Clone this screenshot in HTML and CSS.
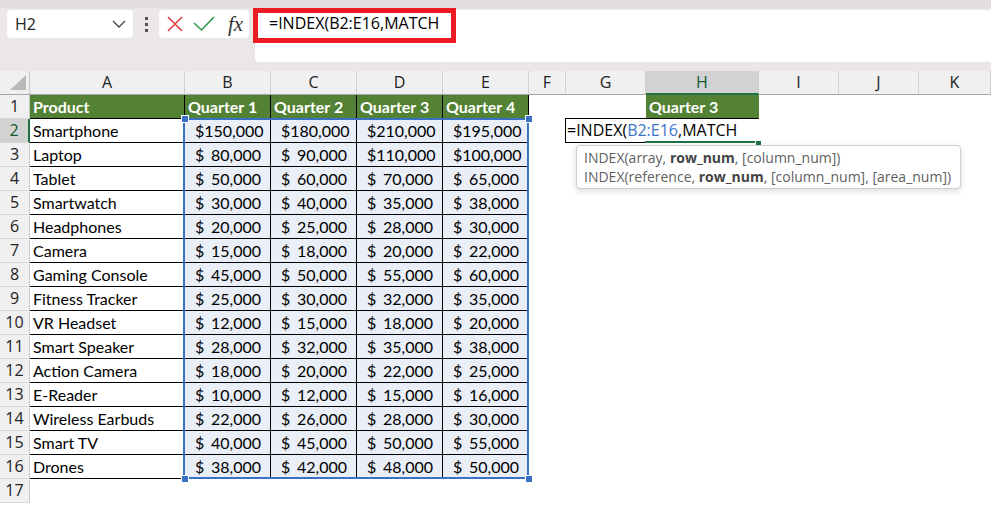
FILE: index.html
```html
<!DOCTYPE html>
<html lang="en">
<head>
    <meta charset="UTF-8">
    <meta name="viewport" content="width=device-width, initial-scale=1.0">
    <title>INDEX MATCH - Quarter 3</title>
    <link rel="stylesheet" href="styles.css">
</head>
<body>
    <div class="toolbar">
        <div class="name-box">
            <span>H2</span>
            <svg class="chevron" width="14" height="8" viewBox="0 0 14 8">
                <polyline points="1,1 7,7 13,1" fill="none" stroke="#444" stroke-width="1.3"/>
            </svg>
        </div>
        <div class="dots"><i></i><i></i><i></i></div>
        <div class="fx-buttons">
            <svg width="16" height="16" viewBox="0 0 16 16">
                <path d="M1 1 L15 15 M15 1 L1 15" stroke="#e0393e" stroke-width="1.5" fill="none"/>
            </svg>
            <svg width="22" height="16" viewBox="0 0 22 16">
                <polyline points="1,7 8.5,14 21,1" fill="none" stroke="#2f9a4c" stroke-width="1.6"/>
            </svg>
            <span class="fx">fx</span>
        </div>
        <div class="formula-bar">=INDEX(B2:E16,MATCH</div>
        <div class="callout"></div>
    </div>

    <div class="sheet">
        <div class="row col-heads">
            <div class="corner"></div>
            <div class="ch">A</div><div class="ch">B</div><div class="ch">C</div><div class="ch">D</div>
            <div class="ch">E</div><div class="ch">F</div><div class="ch">G</div><div class="ch on">H</div>
            <div class="ch">I</div><div class="ch">J</div><div class="ch">K</div>
        </div>

        <div class="row">
            <div class="rh">1</div>
            <div class="c t hd">Product</div>
            <div class="c t hd">Quarter 1</div><div class="c t hd">Quarter 2</div>
            <div class="c t hd">Quarter 3</div><div class="c t hd">Quarter 4</div>
            <div class="c"></div><div class="c"></div>
            <div class="c hd lookup">Quarter 3</div>
        </div>
        <div class="row">
            <div class="rh on">2</div><div class="c t">Smartphone</div>
            <div class="c t n"><span>$</span>150,000</div><div class="c t n"><span>$</span>180,000</div>
            <div class="c t n"><span>$</span>210,000</div><div class="c t n"><span>$</span>195,000</div>
        </div>
        <div class="row">
            <div class="rh">3</div><div class="c t">Laptop</div>
            <div class="c t n"><span>$</span>80,000</div><div class="c t n"><span>$</span>90,000</div>
            <div class="c t n"><span>$</span>110,000</div><div class="c t n"><span>$</span>100,000</div>
        </div>
        <div class="row">
            <div class="rh">4</div><div class="c t">Tablet</div>
            <div class="c t n"><span>$</span>50,000</div><div class="c t n"><span>$</span>60,000</div>
            <div class="c t n"><span>$</span>70,000</div><div class="c t n"><span>$</span>65,000</div>
        </div>
        <div class="row">
            <div class="rh">5</div><div class="c t">Smartwatch</div>
            <div class="c t n"><span>$</span>30,000</div><div class="c t n"><span>$</span>40,000</div>
            <div class="c t n"><span>$</span>35,000</div><div class="c t n"><span>$</span>38,000</div>
        </div>
        <div class="row">
            <div class="rh">6</div><div class="c t">Headphones</div>
            <div class="c t n"><span>$</span>20,000</div><div class="c t n"><span>$</span>25,000</div>
            <div class="c t n"><span>$</span>28,000</div><div class="c t n"><span>$</span>30,000</div>
        </div>
        <div class="row">
            <div class="rh">7</div><div class="c t">Camera</div>
            <div class="c t n"><span>$</span>15,000</div><div class="c t n"><span>$</span>18,000</div>
            <div class="c t n"><span>$</span>20,000</div><div class="c t n"><span>$</span>22,000</div>
        </div>
        <div class="row">
            <div class="rh">8</div><div class="c t">Gaming Console</div>
            <div class="c t n"><span>$</span>45,000</div><div class="c t n"><span>$</span>50,000</div>
            <div class="c t n"><span>$</span>55,000</div><div class="c t n"><span>$</span>60,000</div>
        </div>
        <div class="row">
            <div class="rh">9</div><div class="c t">Fitness Tracker</div>
            <div class="c t n"><span>$</span>25,000</div><div class="c t n"><span>$</span>30,000</div>
            <div class="c t n"><span>$</span>32,000</div><div class="c t n"><span>$</span>35,000</div>
        </div>
        <div class="row">
            <div class="rh">10</div><div class="c t">VR Headset</div>
            <div class="c t n"><span>$</span>12,000</div><div class="c t n"><span>$</span>15,000</div>
            <div class="c t n"><span>$</span>18,000</div><div class="c t n"><span>$</span>20,000</div>
        </div>
        <div class="row">
            <div class="rh">11</div><div class="c t">Smart Speaker</div>
            <div class="c t n"><span>$</span>28,000</div><div class="c t n"><span>$</span>32,000</div>
            <div class="c t n"><span>$</span>35,000</div><div class="c t n"><span>$</span>38,000</div>
        </div>
        <div class="row">
            <div class="rh">12</div><div class="c t">Action Camera</div>
            <div class="c t n"><span>$</span>18,000</div><div class="c t n"><span>$</span>20,000</div>
            <div class="c t n"><span>$</span>22,000</div><div class="c t n"><span>$</span>25,000</div>
        </div>
        <div class="row">
            <div class="rh">13</div><div class="c t">E-Reader</div>
            <div class="c t n"><span>$</span>10,000</div><div class="c t n"><span>$</span>12,000</div>
            <div class="c t n"><span>$</span>15,000</div><div class="c t n"><span>$</span>16,000</div>
        </div>
        <div class="row">
            <div class="rh">14</div><div class="c t">Wireless Earbuds</div>
            <div class="c t n"><span>$</span>22,000</div><div class="c t n"><span>$</span>26,000</div>
            <div class="c t n"><span>$</span>28,000</div><div class="c t n"><span>$</span>30,000</div>
        </div>
        <div class="row">
            <div class="rh">15</div><div class="c t">Smart TV</div>
            <div class="c t n"><span>$</span>40,000</div><div class="c t n"><span>$</span>45,000</div>
            <div class="c t n"><span>$</span>50,000</div><div class="c t n"><span>$</span>55,000</div>
        </div>
        <div class="row">
            <div class="rh">16</div><div class="c t">Drones</div>
            <div class="c t n"><span>$</span>38,000</div><div class="c t n"><span>$</span>42,000</div>
            <div class="c t n"><span>$</span>48,000</div><div class="c t n"><span>$</span>50,000</div>
        </div>
        <div class="row">
            <div class="rh">17</div>
        </div>

        <!-- plage B2:E16 en surbrillance -->
        <div class="selection"></div>
        <span class="handle h-tl"></span>
        <span class="handle h-tr"></span>
        <span class="handle h-bl"></span>
        <span class="handle h-br"></span>

        <!-- cellule H2 en cours d'édition -->
        <div class="editor">=INDEX(<span class="ref">B2:E16</span>,MATCH</div>
        <div class="active-line"></div>
        <span class="active-handle"></span>

        <div class="tooltip">
            <div>INDEX(array, <b>row_num</b>, [column_num])</div>
            <div>INDEX(reference, <b>row_num</b>, [column_num], [area_num])</div>
        </div>
    </div>
</body>
</html>
```

FILE: styles.css
```css
* {
    margin: 0;
    padding: 0;
    box-sizing: border-box;
}

body {
    font-family: 'Open Sans', 'Noto Sans', sans-serif;
    background: #ffffff;
    color: #000;
    width: 991px;
    height: 506px;
    overflow: hidden;
}

/* ---------- barre de formule ---------- */

.toolbar {
    position: relative;
    display: flex;
    align-items: flex-start;
    height: 71px;
    padding: 10px 0 0 7px;
    background: linear-gradient(#e2dedd 0, #e2dedd 8px, #ebe8e7 9px, #e9e6e5 100%);
}

.name-box {
    display: flex;
    align-items: center;
    justify-content: space-between;
    width: 126px;
    height: 28px;
    padding: 0 7px 0 8px;
    background: white;
    border-radius: 4px;
    font-size: 16px;
    color: #222;
}

.dots {
    display: flex;
    flex-direction: column;
    align-items: center;
    justify-content: center;
    gap: 3px;
    width: 26px;
    height: 28px;
}

.dots i {
    display: block;
    width: 3px;
    height: 3px;
    background: #555;
}

.fx-buttons {
    display: flex;
    align-items: center;
    width: 90px;
    height: 28px;
    padding-left: 8px;
    background: white;
    border-radius: 4px;
}

.fx-buttons svg:nth-child(2) {
    margin-left: 10px;
}

.fx {
    margin-left: 13px;
    font-family: 'Liberation Serif', serif;
    font-style: italic;
    font-size: 21px;
    color: #333;
    line-height: 1;
}

.formula-bar {
    flex: 1;
    height: 52px;
    margin-left: 6px;
    padding: 2px 0 0 14px;
    background: white;
    border-radius: 4px 0 0 4px;
    font-size: 16px;
    line-height: 22px;
}

.callout {
    position: absolute;
    left: 253px;
    top: 8px;
    width: 203px;
    height: 35px;
    border: 5px solid #ec1c24;
}

/* ---------- grille ---------- */

.sheet {
    position: relative;
    font-family: 'Lato', 'Open Sans', sans-serif;
    font-size: 16px;
}

.row {
    display: grid;
    grid-template-columns: 30px 155px 86px 86px 86px 86px 37px 80px 113px 80px 80px 1fr;
    height: 24px;
}

.row > div {
    height: 24px;
}

.col-heads {
    background: #f0f0f0;
}

.corner {
    position: relative;
    border-right: 1px solid #c8c8c8;
    border-bottom: 1px solid #a5a5a5;
}

.corner::after {
    content: '';
    position: absolute;
    right: 3px;
    bottom: 4px;
    border-left: 16px solid transparent;
    border-bottom: 15px solid #b9b9b9;
}

.ch {
    font-family: 'Open Sans', sans-serif;
    font-size: 16px;
    line-height: 23px;
    text-align: center;
    color: #222;
    border-right: 1px solid #d0d0d0;
    border-bottom: 1px solid #a5a5a5;
}

.ch.on {
    background: #d2d2d2;
    color: #0f5a30;
    border-bottom: 2px solid #1f7145;
}

.rh {
    font-family: 'Open Sans', sans-serif;
    font-size: 16px;
    line-height: 23px;
    text-align: center;
    color: #222;
    background: #f0f0f0;
    border-right: 1px solid #c8c8c8;
    border-bottom: 1px solid #d8d8d8;
}

.rh.on {
    background: #d2d2d2;
    color: #0f5a30;
    border-right: 2px solid #1f7145;
}

.c {
    padding: 0 3px;
    line-height: 24px;
    white-space: nowrap;
    overflow: hidden;
}

.t {
    border-right: 1px solid #000;
    border-bottom: 1px solid #000;
}

.hd {
    background: #548235;
    color: white;
    font-weight: bold;
}

.lookup {
    border-bottom: 1px solid #2c5e1e;
}

.n {
    display: flex;
    justify-content: space-between;
    padding: 0 9px 0 10px;
    background: #e9eef7;
}

/* ---------- sélection et édition ---------- */

.selection {
    position: absolute;
    left: 183px;
    top: 47px;
    width: 346px;
    height: 361px;
    border: 2px solid #3a70c6;
}

.handle {
    position: absolute;
    width: 6px;
    height: 6px;
    background: #3a70c6;
    outline: 1px solid white;
}

.h-tl { left: 182px; top: 45px; }
.h-tr { left: 526px; top: 45px; }
.h-bl { left: 182px; top: 405px; }
.h-br { left: 526px; top: 405px; }

.editor {
    position: absolute;
    left: 565px;
    top: 47px;
    width: 193px;
    height: 25px;
    padding-left: 1px;
    background: white;
    border: 1px solid #000;
    border-right: none;
    font-family: 'Open Sans', sans-serif;
    font-size: 16px;
    line-height: 23px;
}

.editor .ref {
    color: #3b74c9;
}

.active-line {
    position: absolute;
    left: 645px;
    top: 70px;
    width: 111px;
    height: 2px;
    background: #1f7145;
}

.active-handle {
    position: absolute;
    left: 756px;
    top: 70px;
    width: 5px;
    height: 5px;
    background: #1f7145;
    outline: 1px solid white;
}

.tooltip {
    position: absolute;
    left: 576px;
    top: 74px;
    width: 385px;
    padding: 2px 7px;
    background: white;
    border: 1px solid #cfcfcf;
    border-radius: 4px;
    box-shadow: 0 2px 6px rgba(0, 0, 0, 0.15);
    font-family: 'Open Sans', sans-serif;
    font-size: 14px;
    line-height: 19px;
    color: #5f5f5f;
}

.tooltip b {
    color: #444;
}
```
